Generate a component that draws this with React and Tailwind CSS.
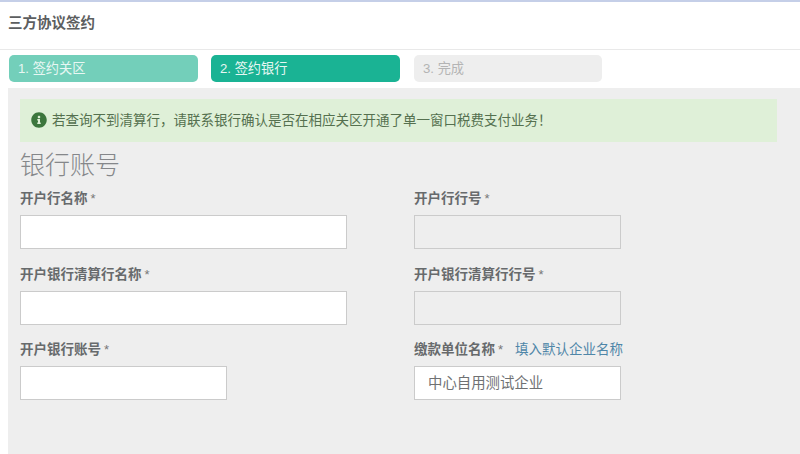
import React from "react";
import { FaInfoCircle } from "react-icons/fa";

const Field = ({ label, width, disabled, value, link }) => {
  return (
    <div>
      <div className="h-[25px] flex items-start">
        <span className="text-[13.5px] leading-[17px] font-bold text-[#676a6c]">{label}</span>
        <span className="text-[13px] leading-[17px] text-[#777777] ml-[3px]">*</span>
        {link && <a className="ml-[12px] text-[13.5px] leading-[17px] text-[#4f86a8]">{link}</a>}
      </div>
      <input
        readOnly
        disabled={disabled}
        value={value || ""}
        className={`block h-[34px] px-[13px] pb-[3px] border border-[#cbcbcb] text-[14.4px] text-[#6f7173] outline-none ${width} ${
          disabled ? "bg-[#eeeeee]" : "bg-white"
        }`}
      />
    </div>
  );
};

const Step = ({ className, children }) => {
  return (
    <div className={`h-[27px] rounded-[5px] pl-[9px] flex items-center text-[13.2px] ${className}`}>
      {children}
    </div>
  );
};

const App = () => {
  return (
    <div
      className="h-[454px] w-[800px] overflow-hidden flex flex-col bg-white border-t-2 border-[#c5cfe8]"
      style={{ fontFamily: '"Liberation Sans", "Noto Sans CJK SC", sans-serif' }}
    >
      <div className="h-[48px] shrink-0 border-b border-[#e9e9e9] pl-2 pb-1 flex items-center">
        <h1 className="text-[14.5px] font-bold text-[#5c5e60]">三方协议签约</h1>
      </div>

      <div className="h-[38px] shrink-0 pl-[9px] pt-[5px] flex">
        <Step className="w-[189px] bg-[#73cfba] text-[#e8f7f3]">1. 签约关区</Step>
        <Step className="w-[189px] ml-[13px] bg-[#1ab394] text-[#e6f7f3]">2. 签约银行</Step>
        <Step className="w-[188px] ml-[14px] pl-[8px] bg-[#eeeeee] text-[#b4b4b4]">3. 完成</Step>
      </div>

      <div className="flex-1 ml-2 bg-[#eeeeee] pl-3 pt-[11px] pr-[23px]">
        <div className="h-[43px] bg-[#dff0d8] text-[#55704f] flex items-center pl-[11px] pt-[2px] text-[13.5px]">
          <FaInfoCircle className="text-[#3c763d] w-[16px] h-[16px] mr-[5px] mb-[3px]" />
          若查询不到清算行，请联系银行确认是否在相应关区开通了单一窗口税费支付业务！
        </div>

        <h2 className="mt-[7px] h-[41px] text-[25px] leading-[32px] font-light text-[#85878a]">银行账号</h2>

        <div className="grid grid-cols-[394px_1fr] grid-rows-[76px_75px_76px]">
          <Field label="开户行名称" width="w-[327px]" />
          <Field label="开户行行号" width="w-[207px]" disabled />
          <Field label="开户银行清算行名称" width="w-[327px]" />
          <Field label="开户银行清算行行号" width="w-[207px]" disabled />
          <Field label="开户银行账号" width="w-[207px]" />
          <Field label="缴款单位名称" width="w-[207px]" value="中心自用测试企业" link="填入默认企业名称" />
        </div>
      </div>
    </div>
  );
};

export default App;
